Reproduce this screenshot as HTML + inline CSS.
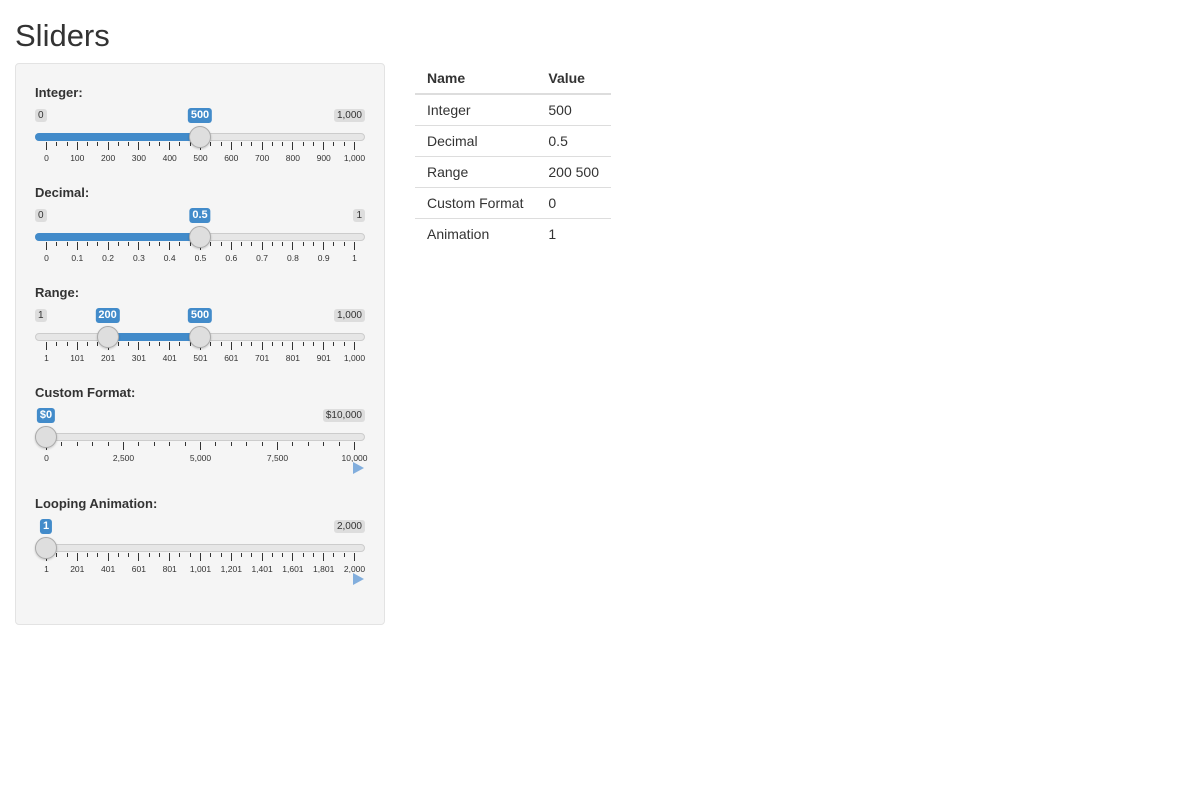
<!DOCTYPE html>
<html><head><meta charset="utf-8">
<style>
*{box-sizing:border-box}
body{margin:0;width:1200px;height:787px;background:#fff;font-family:"Liberation Sans",Arial,sans-serif;color:#333;position:relative;overflow:hidden}
h2{position:absolute;left:15px;top:17px;margin:0;font-size:31px;font-weight:500;line-height:38px}
.well{position:absolute;left:15px;top:63px;width:370px;height:562px;background:#f5f5f5;border:1px solid #e3e3e3;border-radius:4px}
.a{position:absolute}
.lbl{font-weight:bold;font-size:13px;left:35px}
.mm{background:#ddd;font-size:10px;line-height:13px;padding:0 3px;border-radius:3px;color:#333}
.val{background:#428bca;color:#fff;font-size:11px;line-height:15px;padding:0 3px;border-radius:3px;font-weight:bold}
.track{left:35px;width:330px;height:8px;background:#e6e6e6;border:1px solid #ccc;border-radius:4px}
.bar{height:8px;background:#428bca}
.h{width:22px;height:22px;border-radius:50%;background:#dedede;border:1px solid #aaa;box-shadow:0 1px 2px rgba(0,0,0,.2)}
.t{width:1px;background:#333}
.tn{font-size:8.5px;color:#333;transform:translateX(-50%);line-height:10px;white-space:nowrap}
.play{width:0;height:0;border-left:11px solid #82aedd;border-top:6px solid transparent;border-bottom:6px solid transparent}
table{position:absolute;left:415px;top:63px;border-collapse:collapse;font-size:14px;width:196px;white-space:nowrap}
th{text-align:left;font-weight:bold;height:31px;padding:0 12px;border-bottom:2px solid #ddd}
td{height:31px;padding:0 12px;border-top:1px solid #ddd}
td:first-child,th:first-child{width:122px}
</style></head><body>
<h2>Sliders</h2>
<div class="well"></div>
<div id="s"></div>
<table>
<tr><th>Name</th><th>Value</th></tr>
<tr><td>Integer</td><td>500</td></tr>
<tr><td>Decimal</td><td>0.5</td></tr>
<tr><td>Range</td><td>200 500</td></tr>
<tr><td>Custom Format</td><td>0</td></tr>
<tr><td>Animation</td><td>1</td></tr>
</table>
<script>
var S=[
{y:93,l:"Integer:",min:"0",max:"1,000",vals:[[0.5,"500"]],fill:[0,0.5],maj:["0","100","200","300","400","500","600","700","800","900","1,000"],sub:3},
{y:193,l:"Decimal:",min:"0",max:"1",vals:[[0.5,"0.5"]],fill:[0,0.5],maj:["0","0.1","0.2","0.3","0.4","0.5","0.6","0.7","0.8","0.9","1"],sub:3},
{y:293,l:"Range:",min:"1",max:"1,000",vals:[[0.2,"200"],[0.5,"500"]],fill:[0.2,0.5],maj:["1","101","201","301","401","501","601","701","801","901","1,000"],sub:3},
{y:393,l:"Custom Format:",min:null,max:"$10,000",vals:[[0,"$0"]],fill:null,maj:["0","2,500","5,000","7,500","10,000"],sub:5,play:1},
{y:504,l:"Looping Animation:",min:null,max:"2,000",vals:[[0,"1"]],fill:null,maj:["1","201","401","601","801","1,001","1,201","1,401","1,601","1,801","2,000"],sub:3,play:1}];
var h="";
S.forEach(function(s){
 var y=s.y;
 h+='<div class="a lbl" style="top:'+(y-8)+'px">'+s.l+'</div>';
 if(s.min)h+='<div class="a mm" style="left:35px;top:'+(y+16)+'px">'+s.min+'</div>';
 h+='<div class="a mm" style="right:835px;top:'+(y+16)+'px">'+s.max+'</div>';
 h+='<div class="a track" style="top:'+(y+40)+'px"></div>';
 if(s.fill){var x0=s.fill[0]==0?35:46+308*s.fill[0];var x1=46+308*s.fill[1];
  h+='<div class="a bar" style="top:'+(y+40)+'px;left:'+x0+'px;width:'+(x1-x0)+'px;border-radius:'+(s.fill[0]==0?'4px 0 0 4px':'0')+'"></div>';}
 var n=s.maj.length-1,tot=n*s.sub;
 for(var i=0;i<=tot;i++){var x=Math.round(46+308*i/tot);var mj=i%s.sub==0;
  h+='<div class="a t" style="left:'+x+'px;top:'+(y+49)+'px;height:'+(mj?8:4)+'px"></div>';}
 s.maj.forEach(function(t,i){h+='<div class="a tn" style="left:'+(46.5+308*i/n)+'px;top:'+(y+60)+'px">'+t+'</div>';});
 s.vals.forEach(function(v){var cx=46+308*v[0];
  h+='<div class="a h" style="left:'+(cx-11)+'px;top:'+(y+33)+'px"></div>';
  h+='<div class="a val" style="left:'+cx+'px;top:'+(y+15)+'px;transform:translateX(-50%)">'+v[1]+'</div>';});
 if(s.play)h+='<div class="a play" style="left:353px;top:'+(y+69)+'px"></div>';
});
document.getElementById("s").innerHTML=h;
</script>
</body></html>
